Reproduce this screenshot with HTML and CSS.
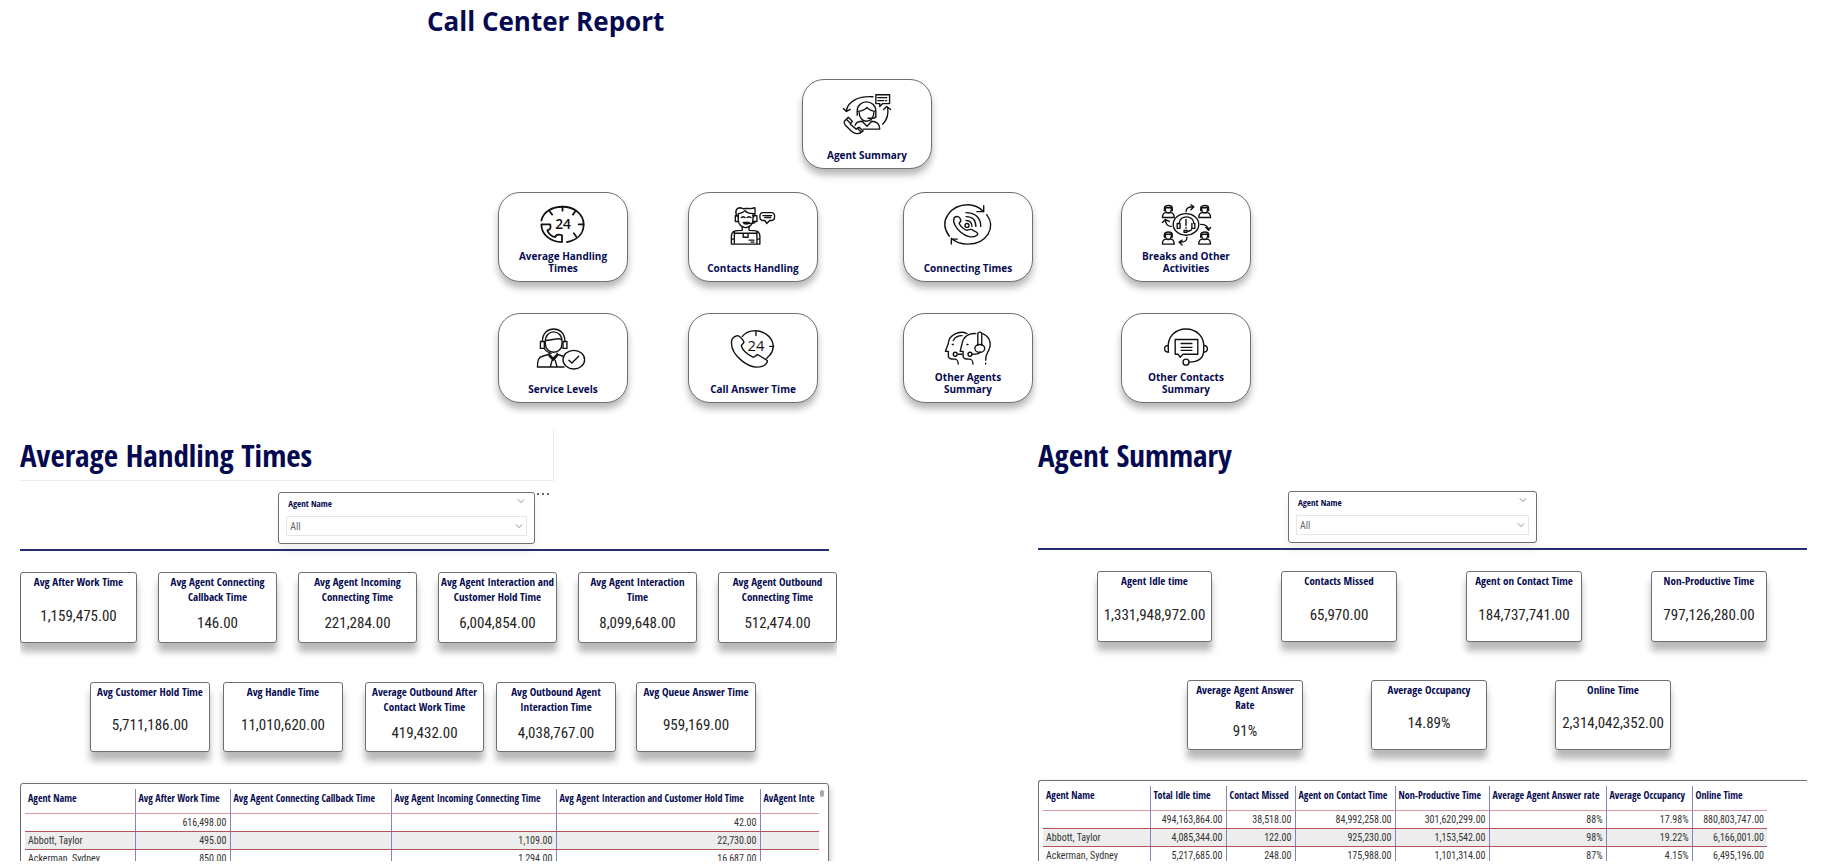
FILE: index.html
```html
<!DOCTYPE html>
<html lang="en">
<head>
<meta charset="utf-8">
<title>Call Center Report</title>
<link rel="stylesheet" href="styles.css">
</head>
<body>
<header class="home">
  <h1 class="home-title">Call Center Report</h1>
  <nav class="tiles" aria-label="Report pages">
    <div class="tile-row tile-row-single">
      <a class="tile" href="#agent-summary">
        <svg class="tile-icon" viewBox="0 0 130 56" aria-hidden="true">
          <path d="M44 31C46 21 57 16 71 17M41 29l3 3 4-2M81 45c5-5 6-11 5-17M82 30l3-3 4 3"/>
          <path d="M74 15h14v9h-7l-3 3v-3h-4zM76 18h9M76 21h6M84 21h1"/>
          <path d="M55 36v-4c0-13 19-13 19 0v4M55 32c5 0 8-2 10-4 2 2 5 4 9 4M57 33c0 6 4 9 7.500 9s7.500-3 7.500-9M66 39h5c3 0 3-2 3-4M74 33v5"/>
          <path d="M60 42l5 5 5-5M53 46c1-4 5-4 8-4M69 42c6 0 9 3 9 8H61"/>
          <path d="M42 42l4-4 4 4-2 3 6 5 3-2 4 4c-4 4-9 3-12 0l-6-6c-1-1-2-2-1-4zM44 40l4 4M55 49l4 4"/>
        </svg>
        <span class="tile-label">Agent Summary</span>
      </a>
    </div>
    <div class="tile-row">
      <a class="tile" href="#average-handling-times">
        <svg class="tile-icon tile-icon-bold" viewBox="0 0 130 56" aria-hidden="true">
          <path d="M43 28C45 19 54 14 64.500 14C77 14 86 22 86 32C86 42 79 48 69 50"/>
          <path d="M64.500 14v4M51 18l3 4M78 18l-3 4M86 32h-5M79 45l-3-4"/>
          <path d="M43 32h9c1 4 0 5-3 6 1 3 4 6 8 7 1-3 4-3 7-2v7C52 50 43 42 43 32z"/>
          <text x="65" y="37" class="icon-number">24</text>
        </svg>
        <span class="tile-label">Average Handling Times</span>
      </a>
      <a class="tile" href="#contacts-handling">
        <svg class="tile-icon" viewBox="0 0 130 56" aria-hidden="true">
          <path d="M49 24c-3-5-1-9 3-9l3 1c5-1 8 1 12-1 0 3 1 6-1 9M50 21c4 0 5-2 7-3 1 2 4 3 9 3M50 22v5c0 11 15 11 15 0v-5"/>
          <path d="M50 23h-3v6h3M65 23h4v6h-4M53 25l2-1 2 1M59 25l2-1 2 1M55 30c1 2 5 2 6 0zM61 31c5 0 6 0 6-2"/>
          <path d="M54 34v4c-6 0-11 0-11 6v8h29v-8c0-6-5-6-11-6v-4M46 40v12M69 40v12M46 41h23M55 41v4h5v-4M43 47h3M69 47h3M61 48h5M63 50h3"/>
          <path d="M75 20h9c4 0 4 8 0 8h-2l-3 3-2-3h-2c-4 0-4-8 0-8zM75 23h9M77 25h6"/>
        </svg>
        <span class="tile-label">Contacts Handling</span>
      </a>
      <a class="tile" href="#connecting-times">
        <svg class="tile-icon" viewBox="0 0 130 56" aria-hidden="true">
          <path d="M46 44C34 28 48 12 65 12c7 0 12 3 16 7M84 22c10 13 0 30-19 30-7 0-13-2-17-6M81 13v6h-7M48 52v-5h6"/>
          <path d="M51 25c3-2 5-1 6 1 2 3-1 4-1 5 2 4 5 6 8 7 2-1 4-2 6 0 5 2 6 4 4 5-9 7-27-9-23-18z"/>
          <circle cx="64" cy="33" r="2"/>
          <path d="M63 28c4 0 6 2 6 6M63 24c7 0 10 4 10 10M63 20c10 0 15 6 15 14"/>
        </svg>
        <span class="tile-label">Connecting Times</span>
      </a>
      <a class="tile" href="#breaks-and-other-activities">
        <svg class="tile-icon" viewBox="0 0 130 56" aria-hidden="true">
          <defs>
            <g id="small-person">
              <path d="M-4 6v-3c0-3 8-3 8 0v3M-4 3h8M-3 4c0 6 6 6 6 0M-6 13c0-4 2-5 4-5h4c2 0 4 1 4 5z"/>
            </g>
          </defs>
          <use href="#small-person" x="47" y="12"/>
          <use href="#small-person" x="84" y="12"/>
          <use href="#small-person" x="47" y="39"/>
          <use href="#small-person" x="84" y="39"/>
          <ellipse cx="65" cy="32" rx="13" ry="11"/>
          <path d="M58 31c0-9 15-9 15 0M58 31h-2v5h3v-5M73 31h1v5h-3v-5M65 27v6M65 35v1M71 36c0 2-2 3-5 3M63 38h3v2h-3z"/>
          <path d="M65 19c0-3 2-5 7-5M70 12l3 2-3 3M80 32c5 0 7 2 8 5M85 35l3 3 2-3M66 45c0 4-2 5-7 5M61 48l-3 2 3 3M50 34c-4 0-5-2-6-6M41 30l3-3 4 2"/>
        </svg>
        <span class="tile-label">Breaks and Other Activities</span>
      </a>
    </div>
    <div class="tile-row tile-row-last">
      <a class="tile" href="#service-levels">
        <svg class="tile-icon" viewBox="0 0 130 56" aria-hidden="true">
          <path d="M44 28c0-17 23-17 23 0M47 28c0-13 17-13 17 0M47 27c7 0 15-4 17 0M47 27v3c0 12 17 12 17 0v-3"/>
          <path d="M46 28h-4v7h4zM65 28h4v7h-4zM46 35c1 3 4 4 7 5"/>
          <path d="M65 43l-6-2-4 4-4-4-7 2c-4 1-5 4-5 11h27M51 40v3l4 4 4-4v-3M54 47l-2 7M57 47l2 7"/>
          <ellipse cx="76" cy="46.500" rx="11" ry="9.500"/>
          <path d="M71 47l3 3 7-7"/>
        </svg>
        <span class="tile-label">Service Levels</span>
      </a>
      <a class="tile" href="#call-answer-time">
        <svg class="tile-icon" viewBox="0 0 130 56" aria-hidden="true">
          <path d="M54 23C59 16 71 15 79 21c7 5 9 14 3 21l-3 3M68 18v4M86 33h-4"/>
          <path d="M43 29c0-3 2-6 6-7 2 0 3 1 6 5 2 2-1 4-2 5 1 5 6 9 12 12 3 0 3-4 6-2l8 5c2 1-1 5-4 6-14 5-32-11-32-24z"/>
          <text x="68" y="38" class="icon-number icon-number-light">24</text>
        </svg>
        <span class="tile-label">Call Answer Time</span>
      </a>
      <a class="tile" href="#other-agents-summary">
        <svg class="tile-icon" viewBox="0 0 130 56" aria-hidden="true">
          <path d="M64 20c-8-4-19 2-19 10l-3 8h3v5c0 3 3 3 6 3 3 0 4 1 4 5M50 27c2-4 5-5 9-5M49 31h1"/>
          <path d="M73 20c-8-1-13 4-14 10l-2 8h3v5c0 3 3 3 6 3 3 0 4 1 4 5M80 20c9 4 9 13 5 19-2 3-2 5-2 8M83 50v1M64 31h1"/>
          <path d="M75 32V20c0-2 4-2 4 0v12"/>
          <ellipse cx="77" cy="35" rx="5" ry="4"/>
          <path d="M77 39c0 2-4 2-8 2M55 41h4"/>
          <circle cx="67" cy="41" r="2"/>
          <circle cx="52" cy="41" r="2"/>
        </svg>
        <span class="tile-label">Other Agents Summary</span>
      </a>
      <a class="tile" href="#other-contacts-summary">
        <svg class="tile-icon" viewBox="0 0 130 56" aria-hidden="true">
          <path d="M47 37c-4-29 40-29 36 0 0 8-5 12-15 12M47 32c-5 0-5 7 0 7zM83 32c5 0 5 7 0 7z"/>
          <path d="M54 26h23v15H62l-3 3-2-3h-3zM60 30h11M60 34h11M60 37h11"/>
          <circle cx="65" cy="49" r="3"/>
        </svg>
        <span class="tile-label">Other Contacts Summary</span>
      </a>
    </div>
  </nav>
</header>

<main class="panels">
  <section class="panel panel-handling" id="average-handling-times">
    <h2 class="panel-title panel-title-boxed">Average Handling Times</h2>
    <div class="filter-row">
      <div class="slicer">
        <div class="slicer-head">
          <label for="agent-left">Agent Name</label>
          <button class="icon-button" type="button" aria-label="Collapse filter"><svg class="chevron" viewBox="0 0 10 10"><path d="M1 3l4 4 4-4"/></svg></button>
        </div>
        <div class="slicer-field">
          <select id="agent-left"><option>All</option></select>
          <svg class="chevron" viewBox="0 0 10 10" aria-hidden="true"><path d="M1 3l4 4 4-4"/></svg>
        </div>
      </div>
      <button class="icon-button more" type="button" aria-label="More options"><svg viewBox="0 0 12 4"><path d="M0 1h2v2H0zM5 1h2v2H5zM10 1h2v2h-2z"/></svg></button>
    </div>
    <hr class="rule rule-handling">
    <div class="kpis kpis-handling-top">
      <article class="kpi"><h3>Avg After Work Time</h3><p>1,159,475.00</p></article>
      <article class="kpi"><h3>Avg Agent Connecting Callback Time</h3><p>146.00</p></article>
      <article class="kpi"><h3>Avg Agent Incoming Connecting Time</h3><p>221,284.00</p></article>
      <article class="kpi"><h3>Avg Agent Interaction and Customer Hold Time</h3><p>6,004,854.00</p></article>
      <article class="kpi"><h3>Avg Agent Interaction<br>Time</h3><p>8,099,648.00</p></article>
      <article class="kpi"><h3>Avg Agent Outbound Connecting Time</h3><p>512,474.00</p></article>
    </div>
    <div class="kpis kpis-handling-bottom">
      <article class="kpi"><h3>Avg Customer Hold Time</h3><p>5,711,186.00</p></article>
      <article class="kpi"><h3>Avg Handle Time</h3><p>11,010,620.00</p></article>
      <article class="kpi"><h3>Average Outbound After Contact Work Time</h3><p>419,432.00</p></article>
      <article class="kpi"><h3>Avg Outbound Agent Interaction Time</h3><p>4,038,767.00</p></article>
      <article class="kpi"><h3>Avg Queue Answer Time</h3><p>959,169.00</p></article>
    </div>
    <div class="table-card table-card-handling">
      <table class="grid">
        <colgroup><col class="h1c"><col class="h2c"><col class="h3c"><col class="h4c"><col class="h5c"><col class="h6c"></colgroup>
        <thead><tr><th>Agent Name</th><th>Avg After Work Time</th><th>Avg Agent Connecting Callback Time</th><th>Avg Agent Incoming Connecting Time</th><th>Avg Agent Interaction and Customer Hold Time</th><th>AvAgent Inte</th></tr></thead>
        <tbody>
          <tr><td></td><td>616,498.00</td><td></td><td></td><td>42.00</td><td></td></tr>
          <tr><td>Abbott, Taylor</td><td>495.00</td><td></td><td>1,109.00</td><td>22,730.00</td><td></td></tr>
          <tr><td>Ackerman, Sydney</td><td>850.00</td><td></td><td>1,294.00</td><td>16,687.00</td><td></td></tr>
        </tbody>
      </table>
      <span class="scroll-thumb"></span>
    </div>
  </section>

  <section class="panel panel-summary" id="agent-summary">
    <h2 class="panel-title">Agent Summary</h2>
    <div class="filter-row">
      <div class="slicer">
        <div class="slicer-head">
          <label for="agent-right">Agent Name</label>
          <button class="icon-button" type="button" aria-label="Collapse filter"><svg class="chevron" viewBox="0 0 10 10"><path d="M1 3l4 4 4-4"/></svg></button>
        </div>
        <div class="slicer-field">
          <select id="agent-right"><option>All</option></select>
          <svg class="chevron" viewBox="0 0 10 10" aria-hidden="true"><path d="M1 3l4 4 4-4"/></svg>
        </div>
      </div>
    </div>
    <hr class="rule">
    <div class="kpis kpis-summary-top">
      <article class="kpi"><h3>Agent Idle time</h3><p>1,331,948,972.00</p></article>
      <article class="kpi"><h3>Contacts Missed</h3><p>65,970.00</p></article>
      <article class="kpi"><h3>Agent on Contact Time</h3><p>184,737,741.00</p></article>
      <article class="kpi"><h3>Non-Productive Time</h3><p>797,126,280.00</p></article>
    </div>
    <div class="kpis kpis-summary-bottom">
      <article class="kpi"><h3>Average Agent Answer<br>Rate</h3><p>91%</p></article>
      <article class="kpi"><h3>Average Occupancy</h3><p>14.89%</p></article>
      <article class="kpi"><h3>Online Time</h3><p>2,314,042,352.00</p></article>
    </div>
    <div class="table-card table-card-summary">
      <table class="grid">
        <colgroup><col class="s1c"><col class="s2c"><col class="s3c"><col class="s4c"><col class="s5c"><col class="s6c"><col class="s7c"><col class="s8c"></colgroup>
        <thead><tr><th>Agent Name</th><th>Total Idle time</th><th>Contact Missed</th><th>Agent on Contact Time</th><th>Non-Productive Time</th><th>Average Agent Answer rate</th><th>Average Occupancy</th><th>Online Time</th></tr></thead>
        <tbody>
          <tr><td></td><td>494,163,864.00</td><td>38,518.00</td><td>84,992,258.00</td><td>301,620,299.00</td><td>88%</td><td>17.98%</td><td>880,803,747.00</td></tr>
          <tr><td>Abbott, Taylor</td><td>4,085,344.00</td><td>122.00</td><td>925,230.00</td><td>1,153,542.00</td><td>98%</td><td>19.22%</td><td>6,166,001.00</td></tr>
          <tr><td>Ackerman, Sydney</td><td>5,217,685.00</td><td>248.00</td><td>175,988.00</td><td>1,101,314.00</td><td>87%</td><td>4.15%</td><td>6,495,196.00</td></tr>
        </tbody>
      </table>
    </div>
  </section>
</main>
</body>
</html>
```
FILE: styles.css
```css
:root {
  --navy: #050a50;
  --ink: #252423;
  --edge: #6f6f6f;
  --narrow: "Open Sans Condensed", "DejaVu Sans Condensed", "Liberation Sans", sans-serif;
  --figures: "Roboto Condensed", "Liberation Sans", sans-serif;
}

* { box-sizing: border-box; }

body {
  margin: 0;
  height: 100vh;
  padding-bottom: 3px;
  display: flex;
  flex-direction: column;
  overflow: hidden;
  background: #fff;
  color: var(--ink);
  font-family: "Open Sans", "Noto Sans", sans-serif;
}

h1, h2, h3, p { margin: 0; }

/* Home page */
.home { padding: 4px 0 27px; }

.home-title {
  padding-left: 427px;
  color: var(--navy);
  font-size: 26px;
  line-height: 34px;
}

.tiles { padding-top: 41px; }

.tile-row {
  display: grid;
  grid-template-columns: 190fr 215fr 218fr 709fr;
  padding-left: 498px;
  margin-top: 32px;
}

.tile-row-single {
  grid-template-columns: 1fr;
  padding-left: 802px;
  margin: 0 0 -9px;
}

.tile-row-last { margin-top: 31px; }

.tile {
  width: 130px;
  height: 90px;
  display: flex;
  flex-direction: column;
  justify-content: space-between;
  padding-bottom: 7px;
  border: 1px solid var(--edge);
  border-radius: 22px;
  background: #fff;
  box-shadow: 0 6px 7px rgba(0, 0, 0, .28);
  text-decoration: none;
}

.tile-icon {
  width: 128px;
  height: 55px;
  flex: none;
  overflow: visible;
  fill: none;
  stroke: #111;
  stroke-width: 1.4;
  stroke-linecap: round;
  stroke-linejoin: round;
}

.tile-icon-bold { stroke-width: 1.8; }

.icon-number {
  fill: #111;
  stroke: none;
  font: 600 14px "Open Sans", sans-serif;
  text-anchor: middle;
}

.icon-number-light { font-weight: 400; font-size: 15px; }

.tile-label {
  padding: 0 16px;
  color: var(--navy);
  font-size: 10px;
  font-weight: 700;
  line-height: 12px;
  text-align: center;
}

/* Report panels */
.panels {
  flex: 1;
  min-height: 0;
  display: grid;
  grid-template-columns: minmax(0, 817fr) minmax(0, 769fr);
  grid-template-rows: minmax(0, 1fr);
  column-gap: 201px;
  padding: 0 23px 0 20px;
}

.panel { overflow: hidden; font-family: var(--narrow); }

.panel-title {
  height: 50px;
  color: var(--navy);
  font-size: 31px;
  line-height: 50px;
}

.panel-title-boxed {
  width: 65.3%;
  height: 51px;
  border: solid #ececec;
  border-width: 0 1px 1px 0;
}

.filter-row {
  display: flex;
  align-items: flex-start;
  gap: 2px;
  margin-top: 11px;
  padding-left: 31.6%;
}

.panel-summary .filter-row { padding-left: 32.5%; }

.slicer {
  width: 46%;
  height: 52px;
  padding: 4px 7px;
  border: 1px solid var(--edge);
  border-radius: 3px;
  background: #fff;
  box-shadow: 0 8px 8px rgba(0, 0, 0, .06);
}

.panel-summary .slicer { width: 48%; }

.slicer-head {
  display: flex;
  justify-content: space-between;
  padding: 0 2px;
  color: var(--navy);
  font-size: 9px;
  font-weight: 700;
  line-height: 14px;
}

.icon-button {
  display: flex;
  padding: 0;
  border: 0;
  background: none;
}

.slicer-field {
  display: flex;
  align-items: center;
  height: 20px;
  margin-top: 5px;
  padding: 0 3px;
  border: 1px solid #e6e6e6;
}

.slicer-field select {
  flex: 1;
  padding: 0;
  border: 0;
  appearance: none;
  background: none;
  color: #666;
  font: 10px var(--figures);
}

.chevron {
  width: 8px;
  height: 8px;
  fill: none;
  stroke: #777;
  stroke-width: 1;
}

.more svg { width: 12px; height: 4px; fill: #666; }

.rule {
  height: 2px;
  margin: 5px 0 0;
  border: 0;
  background: #252d6e;
}

.rule-handling { width: 99%; }

/* KPI cards */
.kpis { display: grid; align-items: start; }

.kpi {
  min-width: 0;
  height: 71px;
  padding: 1px 2px 0;
  display: flex;
  flex-direction: column;
  border: 1px solid var(--edge);
  border-radius: 3px;
  background: #fff;
  box-shadow: 0 9px 7px rgba(0, 0, 0, .28);
  text-align: center;
}

.kpi h3 {
  color: var(--navy);
  font-size: 11px;
  line-height: 15px;
}

.kpi p {
  margin: auto 0;
  font-family: var(--figures);
  font-size: 15px;
  line-height: 20px;
}

.kpis-handling-top {
  grid-template-columns: 117fr repeat(5, 119fr);
  column-gap: 21px;
  margin-top: 21px;
}

.kpis-handling-bottom {
  grid-template-columns: 70fr 120fr 13fr 120fr 22fr 119fr 12fr 120fr 20fr 120fr 81fr;
  margin-top: 39px;
}

.kpis-summary-top {
  grid-template-columns: 59fr 115fr 69fr 116fr 69fr 116fr 69fr 116fr 40fr;
  margin-top: 21px;
}

.kpis-summary-bottom {
  grid-template-columns: 149fr 116fr 68fr 116fr 68fr 116fr 136fr;
  margin-top: 38px;
}

.kpis-handling-bottom .kpi:nth-child(1),
.kpis-summary-top .kpi:nth-child(1),
.kpis-summary-bottom .kpi:nth-child(1) { grid-column: 2; }
.kpis-handling-bottom .kpi:nth-child(2),
.kpis-summary-top .kpi:nth-child(2),
.kpis-summary-bottom .kpi:nth-child(2) { grid-column: 4; }
.kpis-handling-bottom .kpi:nth-child(3),
.kpis-summary-top .kpi:nth-child(3),
.kpis-summary-bottom .kpi:nth-child(3) { grid-column: 6; }
.kpis-handling-bottom .kpi:nth-child(4),
.kpis-summary-top .kpi:nth-child(4) { grid-column: 8; }
.kpis-handling-bottom .kpi:nth-child(5) { grid-column: 10; }

.kpis-handling-bottom .kpi,
.kpis-summary-bottom .kpi { height: 70px; }

/* Tables */
.table-card {
  position: relative;
  height: 120px;
  padding: 5px 9px 0 4px;
  border: 1px solid var(--edge);
  border-radius: 3px;
  box-shadow: 0 4px 7px rgba(0, 0, 0, .3);
}

.table-card-handling { width: 99%; margin-top: 31px; }

.table-card-summary {
  margin-top: 30px;
  padding-right: 40px;
  border-right: 0;
  border-radius: 3px 0 0 0;
}

.grid {
  width: 100%;
  table-layout: fixed;
  border-collapse: collapse;
  color: #333;
  font-family: var(--figures);
  font-size: 10px;
  line-height: 17px;
}

.grid th, .grid td {
  padding: 0 3px;
  overflow: hidden;
  white-space: nowrap;
  text-align: right;
  border-left: 1px solid #8286b0;
}

.grid th:first-child, .grid td:first-child { border-left: 0; text-align: left; }

.grid th {
  height: 24px;
  padding-bottom: 5px;
  border-bottom: 1px solid #d49a9e;
  color: var(--navy);
  font-family: var(--narrow);
  font-size: 10px;
  font-weight: 700;
  text-align: left;
}

.grid td { height: 18px; border-bottom: 1px solid #b5535b; }
.grid tbody tr:nth-child(even) { background: #ededed; }

.h1c { width: 110px; }
.h2c { width: 95px; }
.h3c { width: 161px; }
.h4c { width: 165px; }
.h5c { width: 204px; }

.s1c { width: 107px; }
.s2c { width: 76px; }
.s3c { width: 69px; }
.s4c { width: 100px; }
.s5c { width: 94px; }
.s6c { width: 117px; }
.s7c { width: 86px; }

.scroll-thumb {
  position: absolute;
  top: 6px;
  right: 4px;
  width: 4px;
  height: 7px;
  border-radius: 2px;
  background: #aaa;
}
```
